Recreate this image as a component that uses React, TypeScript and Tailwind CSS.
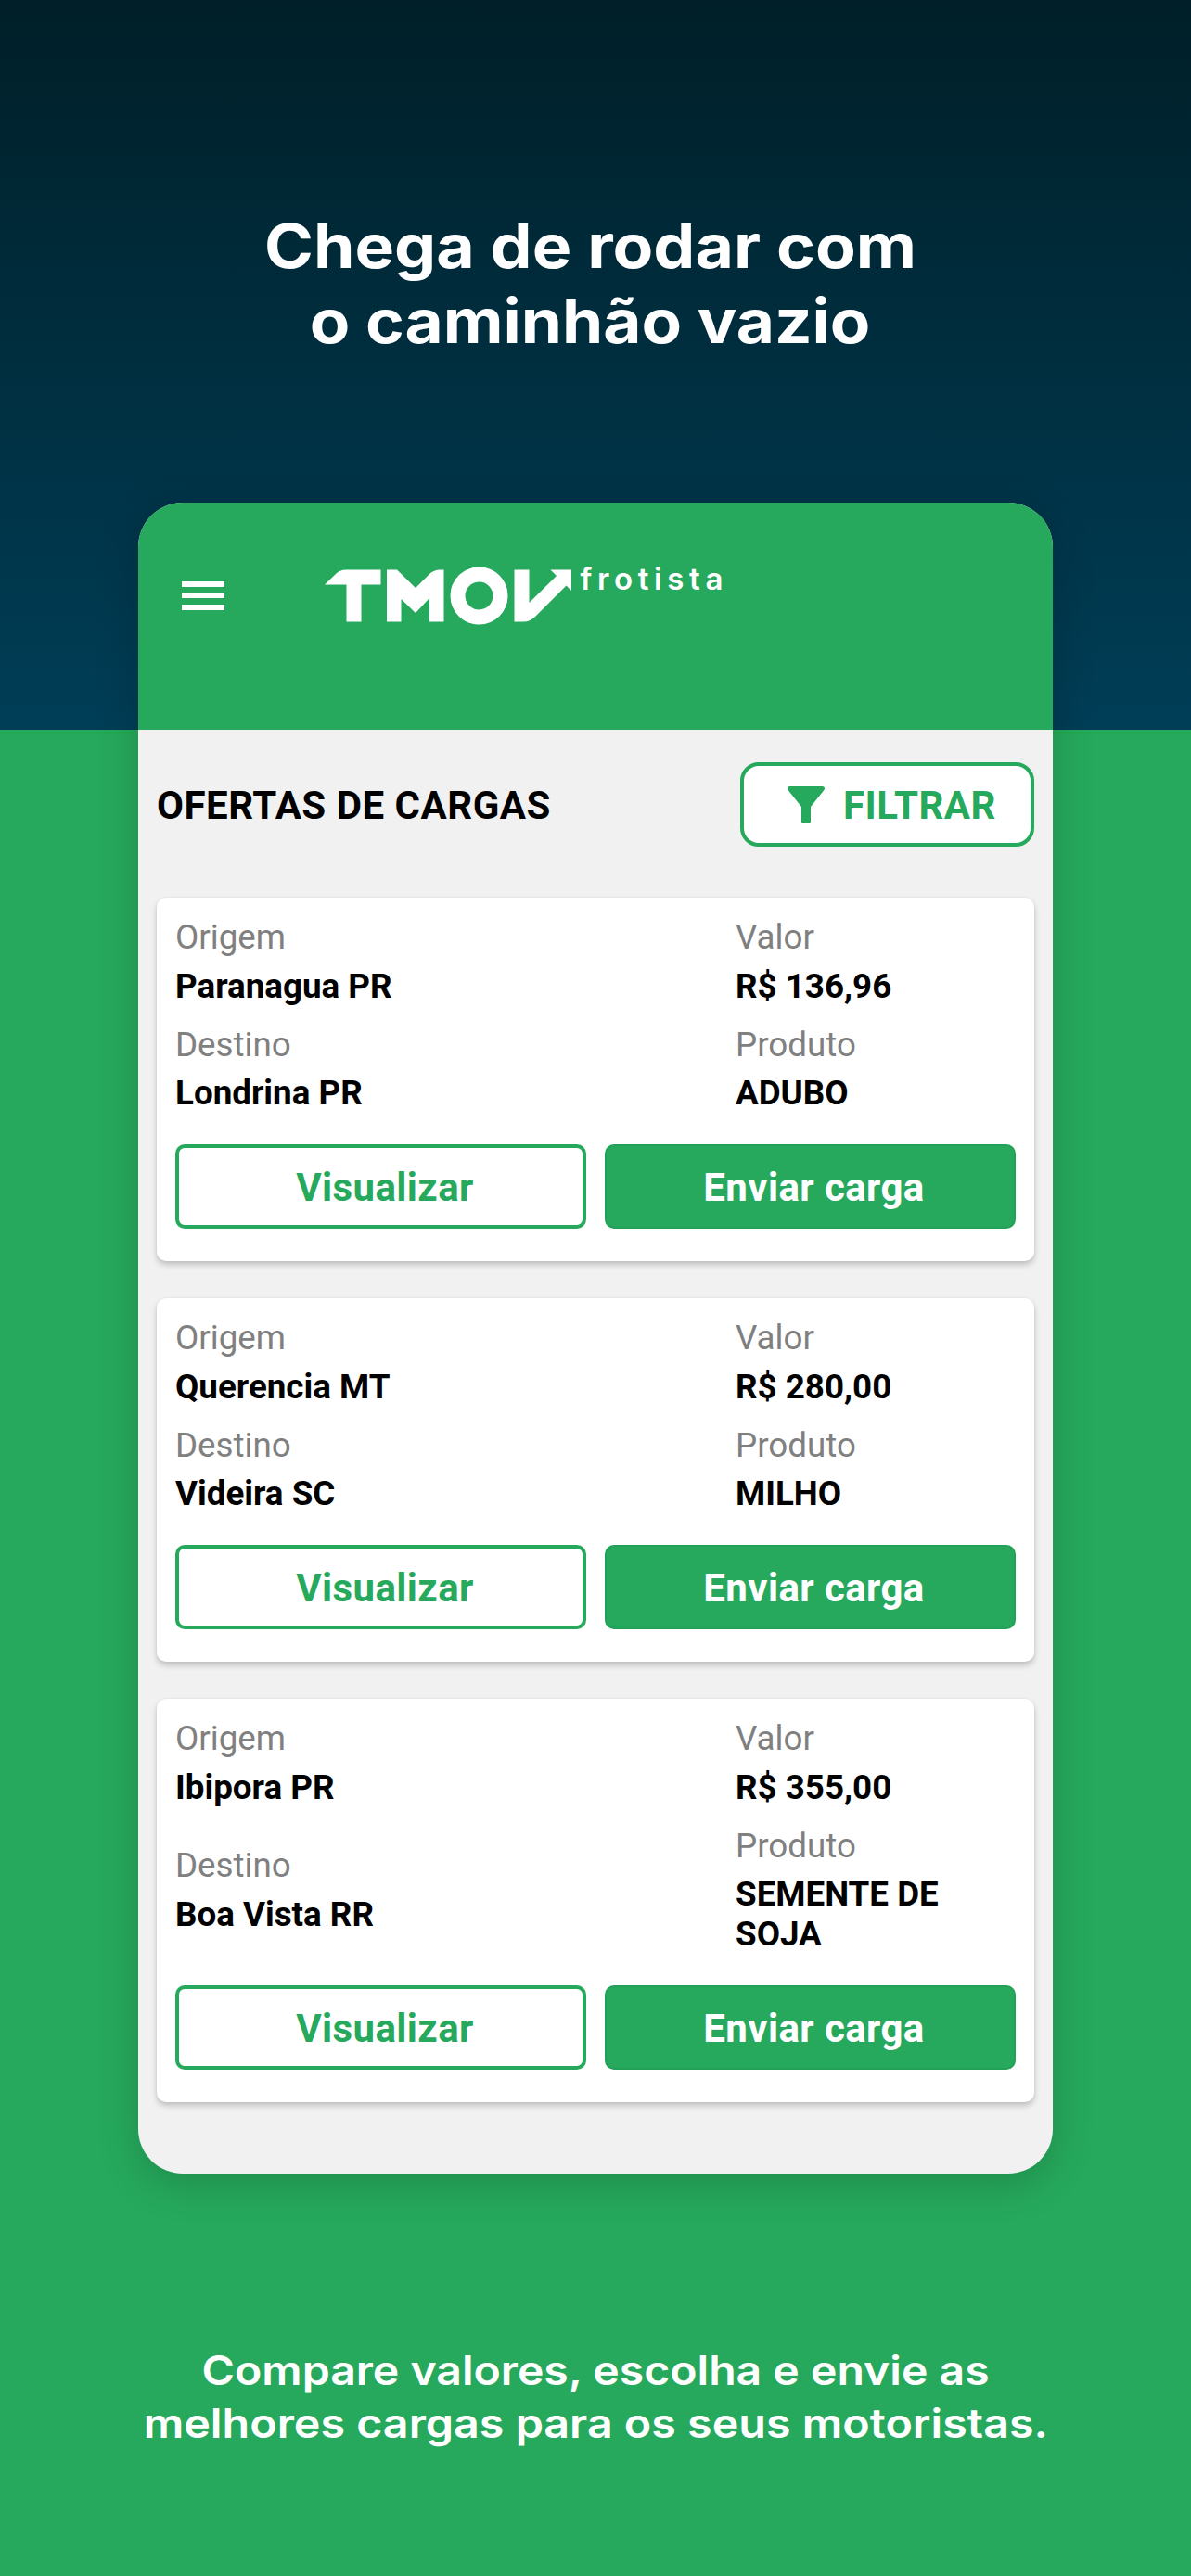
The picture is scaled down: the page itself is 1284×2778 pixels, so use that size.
import React from "react";

type Offer = { origin: string; price: string; destination: string; product: string };

const offers: Offer[] = [
  { origin: "Paranagua PR", price: "R$ 136,96", destination: "Londrina PR", product: "ADUBO" },
  { origin: "Querencia MT", price: "R$ 280,00", destination: "Videira SC", product: "MILHO" },
  { origin: "Ibipora PR", price: "R$ 355,00", destination: "Boa Vista RR", product: "SEMENTE DE SOJA" },
];

function Field({ label, value }: { label: string; value: string }) {
  return (
    <div className="flex flex-col gap-[9.500px] text-[36.75px] leading-[43px]">
      <span className="text-[#808080]">{label}</span>
      <span className="font-bold text-black">{value}</span>
    </div>
  );
}

function OfferCard({ offer }: { offer: Offer }) {
  return (
    <article className="rounded-[10px] bg-white px-5 pt-[21px] pb-[35px] shadow-[0_4px_6px_rgba(0,0,0,0.2),0_0_3px_rgba(0,0,0,0.06)]">
      <div className="grid grid-cols-[604px_1fr] items-center gap-y-5">
        <Field label="Origem" value={offer.origin} />
        <Field label="Valor" value={offer.price} />
        <Field label="Destino" value={offer.destination} />
        <Field label="Produto" value={offer.product} />
      </div>
      <div className="mt-[34px] grid grid-cols-2 gap-[20px] text-[42px] leading-[49px] font-bold tracking-[0.4px]">
        <button className="h-[91px] rounded-[10px] border-4 border-[#26a95c] bg-white pt-px pl-[9px] text-[#26a95c]">Visualizar</button>
        <button className="h-[91px] rounded-[10px] border-2 border-[#23a057] bg-[#26a95c] pt-px pl-[8px] text-white">Enviar carga</button>
      </div>
    </article>
  );
}

function Logo() {
  return (
    <svg className="h-[70px] w-[450px] overflow-visible" viewBox="0 0 450 70" fill="#fff">
      <path d="M0 20.500 L12 9 Q16 4.500 23 4.500 H60.500 V20.500 H39.500 V60.500 H23.500 V20.500Z" />
      <path d="M67 4.500 H78 L98 24 L113 9 Q118 4.500 124 4.500 H128.500 V60.500 H113 V35 L98 51 L82.500 36 V60.500 H67Z" />
      <circle cx="166.500" cy="32.500" r="23" fill="none" stroke="#fff" strokeWidth="16" />
      <path d="M204.500 4.500 H220.500 V40 L250 11 L243.500 4.500 H266 V27 L260.500 21.500 L227 55 Q221.500 60.500 214 60.500 H204.500Z" />
      <text x="275.500" y="26" fontFamily="Inter, sans-serif" fontWeight="600" fontSize="33" textLength="154">
        frotista
      </text>
    </svg>
  );
}

export default function App() {
  return (
    <main className="flex h-[2778px] w-[1284px] flex-col items-center bg-[linear-gradient(180deg,#001f28_0px,#003e57_787px,#26a95c_787px)] font-['Roboto',sans-serif]">
      <h1 className="flex h-[542px] flex-col items-center pt-[225px] pr-[11px] font-['Inter',sans-serif] text-[66px] leading-[81px] font-bold text-white">
        <span className="scale-x-[1.083]">Chega de rodar com</span>
        <span className="scale-x-[1.076]">o caminhão vazio</span>
      </h1>

      <section className="flex h-[1802px] w-[986px] flex-col overflow-hidden rounded-[48px] bg-[#f1f1f1] shadow-[0_10px_45px_rgba(0,0,0,0.18)]">
        <header className="flex h-[245px] shrink-0 items-start bg-[#26a95c] pl-[47px]">
          <div className="mt-[85px] flex w-[46px] flex-col gap-[7px]">
            <div className="h-[5.500px] bg-white" />
            <div className="h-[5.500px] bg-white" />
            <div className="h-[5.500px] bg-white" />
          </div>
          <div className="mt-[68px] ml-[108px]">
            <Logo />
          </div>
        </header>

        <div className="flex flex-col px-5">
          <div className="mt-[35px] mb-[55px] flex h-[91px] items-center justify-between text-[42px] leading-[49px] font-bold tracking-[0.5px]">
            <h2 className="pt-px text-black">OFERTAS DE CARGAS</h2>
            <button className="flex h-[91px] w-[317px] items-center rounded-[20px] border-4 border-[#26a95c] bg-white pl-[47px] text-[#26a95c]">
              <svg className="h-10 w-10" viewBox="0 0 40 40" fill="#26a95c">
                <path d="M2 0 H38 Q41.500 1 39 4.500 L25 22 V37.500 Q25 40 22.500 40 H17.500 Q15 40 15 37.500 V22 L1 4.500 Q-1.500 1 2 0Z" />
              </svg>
              <span className="ml-5 pt-px">FILTRAR</span>
            </button>
          </div>
          <div className="flex flex-col gap-10">
            {offers.map((o) => (
              <OfferCard key={o.origin} offer={o} />
            ))}
          </div>
        </div>
      </section>

      <p className="flex flex-col items-center pt-[184px] font-['Inter',sans-serif] text-[44px] leading-[57px] font-semibold text-white">
        <span className="scale-x-[1.094]">Compare valores, escolha e envie as</span>
        <span className="scale-x-[1.1]">melhores cargas para os seus motoristas.</span>
      </p>
    </main>
  );
}
